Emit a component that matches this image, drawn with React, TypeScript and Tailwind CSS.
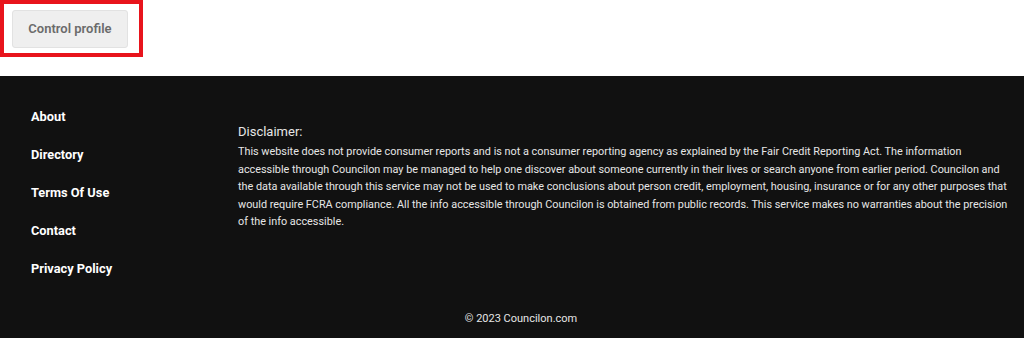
import React from "react";

export default function App() {
  const links = ["About", "Directory", "Terms Of Use", "Contact", "Privacy Policy"];
  return (
    <div className="w-[1024px] h-[338px] bg-white flex flex-col" style={{ fontFamily: "Roboto, 'Liberation Sans', sans-serif" }}>
      <div className="h-[76px] shrink-0">
        <div className="w-[143px] h-[57px] border-[4px] border-[#e8141c] flex items-start">
          <button className="ml-[8px] mt-[6px] w-[116px] h-[38px] bg-[#efefef] border border-[#e2e2e2] rounded-[3px] text-[13px] font-semibold text-[#6b6b6b]">
            Control profile
          </button>
        </div>
      </div>
      <footer className="flex-1 bg-[#111111] flex flex-col">
        <div className="flex">
          <ul className="w-[238px] shrink-0 pl-[31px] pt-[32px] flex flex-col gap-[20px]">
            {links.map((l) => (
              <li key={l} className="text-[12.8px] font-bold text-white leading-[18px]">{l}</li>
            ))}
          </ul>
          <div className="w-[775px] pt-[47px] text-[#e6e6e6]">
            <div className="text-[13px] leading-[18px] mb-[2px]">Disclaimer:</div>
            <p className="text-[10.85px] leading-[17.6px]">
              This website does not provide consumer reports and is not a consumer reporting agency as explained by the Fair Credit Reporting Act. The information accessible through Councilon may be managed to help one discover about someone currently in their lives or search anyone from earlier period. Councilon and the data available through this service may not be used to make conclusions about person credit, employment, housing, insurance or for any other purposes that would require FCRA compliance. All the info accessible through Councilon is obtained from public records. This service makes no warranties about the precision of the info accessible.
            </p>
          </div>
        </div>
        <div className="mt-auto pb-[11px] pl-[18px] text-center text-[11px] text-[#e6e6e6] leading-[16px]">© 2023 Councilon.com</div>
      </footer>
    </div>
  );
}
